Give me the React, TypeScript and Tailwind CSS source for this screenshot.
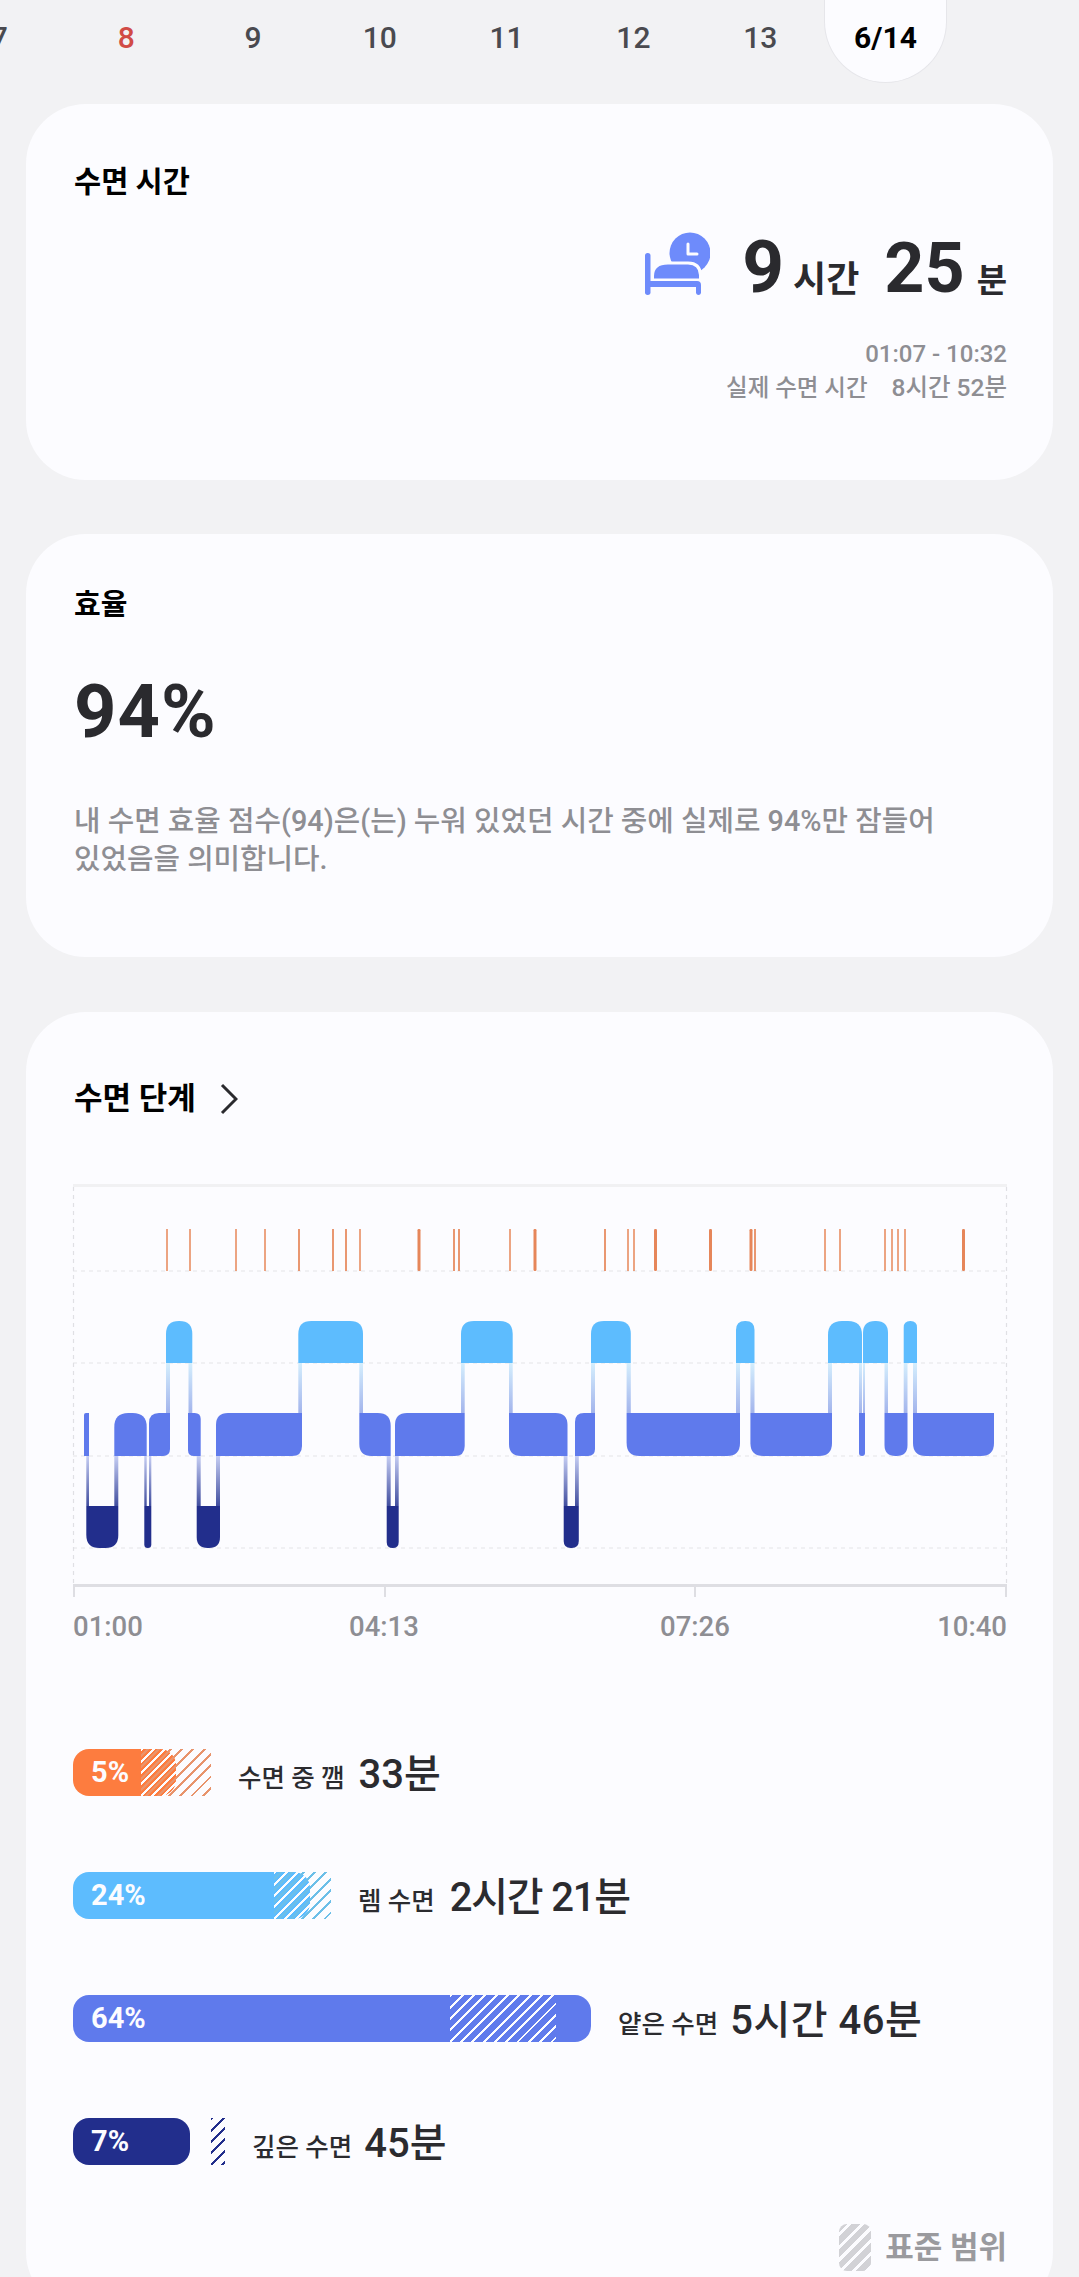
const days = [
  { label: "7", color: "text-[#4a4a4f]" },
  { label: "8", color: "text-[#d14b46]" },
  { label: "9", color: "text-[#4a4a4f]" },
  { label: "10", color: "text-[#4a4a4f]" },
  { label: "11", color: "text-[#4a4a4f]" },
  { label: "12", color: "text-[#4a4a4f]" },
  { label: "13", color: "text-[#4a4a4f]" },
];

const ticks: [number, number][] = [
  [167, 1.5], [190, 1.5], [236, 1.5], [265, 1.5], [299, 1.7], [333, 1.7], [346, 1.7], [360, 1.5], [419, 3], [454, 1.7],
  [459, 1.7], [510, 1.5], [535, 3], [605, 1.7], [628, 1.5], [634, 1.5], [655.5, 3], [710.5, 3], [751, 3], [755, 1.7],
  [825, 1.5], [840, 1.5], [885, 1.5], [892, 1.5], [898, 1.5], [905, 1.5], [963.5, 3],
];

// x0, x1, radii: tl tr br bl
type Seg = [number, number, number, number, number, number];

const remSegs: Seg[] = [
  [166, 192.3, 13, 13, 0, 0],
  [298.3, 363, 13, 13, 0, 0],
  [461, 512.7, 13, 13, 0, 0],
  [591, 630.8, 13, 13, 0, 0],
  [736, 754.5, 9, 9, 0, 0],
  [828, 862, 14, 14, 0, 0],
  [863, 888, 12, 12, 0, 0],
  [903.7, 917, 6.5, 6.5, 0, 0],
];

const lightSegs: Seg[] = [
  [84, 89, 2, 0, 0, 0],
  [114.3, 146.7, 14, 14, 0, 0],
  [149, 170, 10, 0, 7, 0],
  [188, 200.7, 0, 6, 0, 6],
  [216, 302, 12, 0, 10, 0],
  [359.3, 390.7, 0, 13, 0, 12],
  [395, 464.7, 12, 0, 10, 0],
  [509, 567.5, 0, 12, 0, 12],
  [575, 595, 9, 0, 7, 0],
  [626.6, 740, 0, 0, 13, 13],
  [750.4, 832, 0, 0, 13, 13],
  [859, 865, 0, 0, 3, 3],
  [884.5, 907.5, 0, 0, 11, 11],
  [913, 994, 0, 0, 13, 13],
];

const deepSegs: Seg[] = [
  [86.3, 118.3, 0, 0, 13, 13],
  [144.3, 151.3, 0, 0, 3.5, 3.5],
  [196.7, 220, 0, 0, 11, 11],
  [386.7, 398.7, 0, 0, 6, 6],
  [563.7, 578.8, 0, 0, 7, 7],
];

const upLinks = [
  [166, 170], [188.5, 192.3], [298.3, 302], [359.3, 363], [461, 464.7], [509, 512.7], [591, 595], [626.6, 630.8],
  [736, 740], [750.4, 754.5], [828, 832], [859, 862], [863, 865], [884.5, 888], [903.7, 907.5], [913, 917],
];
const downLinks = [
  [86.3, 89], [114.3, 118.3], [144.3, 146.7], [149, 151.3], [196.7, 200.7], [216, 220], [386.7, 390.7], [395, 398.7],
  [563.7, 567.5], [575, 578.8],
];

function segPath(seg: Seg, top: number, bottom: number) {
  const [x0, x1, tl, tr, br, bl] = seg;
  return `M${x0 + tl} ${top}H${x1 - tr}Q${x1} ${top} ${x1} ${top + tr}V${bottom - br}Q${x1} ${bottom} ${x1 - br} ${bottom}H${x0 + bl}Q${x0} ${bottom} ${x0} ${bottom - bl}V${top + tl}Q${x0} ${top} ${x0 + tl} ${top}Z`;
}

function SleepChart() {
  const ox = 60;
  const oy = 1180;
  return (
    <svg width="960" height="420" viewBox={`${ox} ${oy} 960 420`} className="block">
      <defs>
        <linearGradient id="upLink" x1="0" y1="0" x2="0" y2="1">
          <stop offset="0" stopColor="#d4eefd" />
          <stop offset="1" stopColor="#a3b4ec" />
        </linearGradient>
        <linearGradient id="downLink" x1="0" y1="0" x2="0" y2="1">
          <stop offset="0" stopColor="#c5cdf3" />
          <stop offset="1" stopColor="#414e9f" />
        </linearGradient>
      </defs>

      <rect x="73" y="1184" width="934" height="3" fill="#f1f1f3" />
      {[1271, 1363, 1456, 1548].map((y) => (
        <line key={y} x1="73" x2="1007" y1={y} y2={y} stroke="#e4e4e8" strokeWidth="1.2" strokeDasharray="4 4" />
      ))}
      <line x1="73.5" x2="73.5" y1="1187" y2="1585" stroke="#e0e0e4" strokeWidth="1.2" strokeDasharray="4 4" />
      <line x1="1006.5" x2="1006.5" y1="1187" y2="1585" stroke="#e0e0e4" strokeWidth="1.2" strokeDasharray="4 4" />

      {ticks.map(([x, w]) => (
        <rect key={x} x={x - w / 2} y="1229" width={w} height="42" rx={w > 2 ? 1.2 : 0} fill="#e6865a" />
      ))}

      {upLinks.map(([a, b]) => (
        <rect key={a} x={a} y="1363" width={b - a} height="50" fill="url(#upLink)" />
      ))}
      {downLinks.map(([a, b]) => (
        <rect key={a} x={a} y="1456" width={b - a} height="50" fill="url(#downLink)" />
      ))}

      {remSegs.map((s) => (
        <path key={s[0]} d={segPath(s, 1321, 1363)} fill="#5dbcfe" />
      ))}
      {lightSegs.map((s) => (
        <path key={s[0]} d={segPath(s, 1413, 1456)} fill="#5f7aec" />
      ))}
      {deepSegs.map((s) => (
        <path key={s[0]} d={segPath(s, 1506, 1548)} fill="#222e8c" />
      ))}

      <rect x="73" y="1584" width="934" height="3" fill="#dedee3" />
      {[74, 385, 695, 1006].map((x) => (
        <rect key={x} x={x - 1} y="1586" width="2" height="11" fill="#dedee3" />
      ))}
    </svg>
  );
}

function BedIcon() {
  return (
    <svg width="66" height="64" viewBox="0 0 66 64" className="self-start shrink-0">
      <circle cx="46" cy="21" r="20.5" fill="#6e8bfb" />
      <path d="M44 12V22H53" fill="none" stroke="#fcfcff" strokeWidth="3" strokeLinecap="round" strokeLinejoin="round" />
      <path d="M8.5 48V44Q8.5 31 24 31H44Q56 31 56.5 43V48Z" fill="#6e8bfb" stroke="#fcfcff" strokeWidth="3" />
      <rect x="1" y="21" width="5.5" height="42" rx="2.7" fill="#6e8bfb" />
      <path d="M5 49H53Q57 49 57 53V61A2.6 2.6 0 0 1 52 61V55H5Z" fill="#6e8bfb" />
    </svg>
  );
}

function StageRow({
  pct,
  width,
  barWidth,
  hatchLeft,
  hatchWidth,
  bg,
  hatch,
  label,
  value,
  valueClass,
}: {
  pct: string;
  width: number;
  barWidth: number;
  hatchLeft: number;
  hatchWidth: number;
  bg: string;
  hatch: string;
  label: string;
  value: string;
  valueClass: string;
}) {
  return (
    <div className="flex items-center h-[47px]">
      <div className="relative h-[47px] shrink-0" style={{ width }}>
        <div className={`h-full rounded-[16px] pl-[18px] text-[29px] leading-[46px] font-bold text-[#fcfcff] ${bg}`} style={{ width: barWidth }}>
          {pct}
        </div>
        <div className={`absolute top-0 h-full ${hatch}`} style={{ left: hatchLeft, width: hatchWidth }} />
      </div>
      <span className="ml-[27px] mt-[10px] text-[25.5px] leading-[36px] font-medium text-[#2b2b2f] whitespace-nowrap">{label}</span>
      <span className={`mt-[4px] text-[40px] leading-[50px] font-medium text-[#2b2b2f] whitespace-nowrap ${valueClass}`}>{value}</span>
    </div>
  );
}

export default function App() {
  return (
    <div className="h-[2277px] w-[1079px] overflow-hidden bg-[#f2f2f4] font-['Roboto','Noto_Sans_CJK_KR',sans-serif]">
      <div className="flex h-[83px] -ml-[64px] mb-[21px]">
        {days.map((d) => (
          <div key={d.label} className={`w-[126.8px] shrink-0 text-center text-[30px] leading-[76px] font-medium ${d.color}`}>
            {d.label}
          </div>
        ))}
        <div className="w-[126.8px] shrink-0 pr-[3px] pl-0">
          <div className="h-[83px] rounded-b-[62px] bg-[#fcfcff] border border-t-0 border-[#e6e6ea] text-center text-[30px] leading-[76px] font-bold text-black">
            6/14
          </div>
        </div>
      </div>

      <section className="mx-[26px] h-[376px] rounded-[60px] bg-[#fcfcff] pl-[48px] pr-[46px] pt-[58px]">
        <h2 className="text-[29.5px] leading-[40px] font-bold text-black">수면 시간</h2>
        <div className="mt-[30px] flex justify-end items-baseline h-[70px] text-[#2a2a2e] font-bold">
          <BedIcon />
          <span className="ml-[32px] text-[73px] leading-[70px] tracking-[1px]">9</span>
          <span className="ml-[8px] text-[36px] leading-[70px]">시간</span>
          <span className="ml-[25px] text-[70px] leading-[70px]">25</span>
          <span className="ml-[12px] text-[33px] leading-[70px]">분</span>
        </div>
        <p className="mt-[36px] text-right text-[24px] leading-[32px] font-medium text-[#8e8e93]">01:07 - 10:32</p>
        <p className="mt-[2px] flex justify-end gap-[24px] leading-[32px] font-medium text-[#8e8e93]">
          <span className="text-[23.5px]">실제 수면 시간</span>
          <span className="text-[24.5px]">8시간 52분</span>
        </p>
      </section>

      <section className="mx-[26px] mt-[54px] h-[423px] rounded-[60px] bg-[#fcfcff] pl-[48px] pr-[46px] pt-[51px]">
        <h2 className="text-[29px] leading-[40px] font-bold text-black">효율</h2>
        <p className="mt-[51px] text-[74px] leading-[72px] font-bold text-[#2a2a2e] tracking-[1px]">94%</p>
        <p className="mt-[54px] text-[28.8px] leading-[38px] font-medium text-[#8e8e93] whitespace-nowrap">
          내 수면 효율 점수(94)은(는) 누워 있었던 시간 중에 실제로 94%만 잠들어
          <br />
          있었음을 의미합니다.
        </p>
      </section>

      <section className="mx-[26px] mt-[55px] h-[1300px] rounded-[60px] bg-[#fcfcff] pt-[67px]">
        <div className="flex items-center pl-[48px]">
          <h2 className="text-[31px] leading-[40px] font-bold text-black">수면 단계</h2>
          <svg width="18" height="32" viewBox="0 0 18 32" className="ml-[24px]">
            <path d="M2 2L16 16L2 30" fill="none" stroke="#2a2a2e" strokeWidth="3" />
          </svg>
        </div>

        <div className="mt-[61px] ml-[34px]">
          <SleepChart />
        </div>

        <div className="mt-[11px] ml-[47px] grid grid-cols-[157px_308px_314px_155px] text-[27.5px] leading-[32px] font-medium text-[#8e8e93]">
          <span>01:00</span>
          <span className="text-center">04:13</span>
          <span className="text-center">07:26</span>
          <span className="text-right">10:40</span>
        </div>

        <div className="mt-[106px] ml-[47px] flex flex-col gap-[76px]">
          <StageRow pct="5%" width={138} barWidth={103} hatchLeft={68} hatchWidth={70} bg="bg-[#fd7c3f]" label="수면 중 깸" value="33분" valueClass="ml-[14px]"
            hatch="bg-[repeating-linear-gradient(135deg,#fcfcff_0_2px,transparent_2px_4px,#e8946c_4px_6px,transparent_6px_8px)]" />
          <StageRow pct="24%" width={258} barWidth={237} hatchLeft={201} hatchWidth={57} bg="bg-[#5dbcfe]" label="렘 수면" value="2시간 21분" valueClass="ml-[15px] tracking-[-1.2px]"
            hatch="bg-[repeating-linear-gradient(135deg,#fcfcff_0_2px,transparent_2px_4px,#6cbfe8_4px_6px,transparent_6px_8px)]" />
          <StageRow pct="64%" width={518} barWidth={518} hatchLeft={377} hatchWidth={106} bg="bg-[#5f7aec]" label="얕은 수면" value="5시간 46분" valueClass="ml-[12px] tracking-[0.5px]"
            hatch="bg-[repeating-linear-gradient(135deg,#fcfcff_0_2px,transparent_2px_8px)]" />
          <StageRow pct="7%" width={152} barWidth={117} hatchLeft={138} hatchWidth={14} bg="bg-[#222e8c]" label="깊은 수면" value="45분" valueClass="ml-[12px]"
            hatch="bg-[repeating-linear-gradient(135deg,#222e8c_0_2px,transparent_2px_8px)]" />
        </div>

        <div className="mt-[59px] mr-[46px] flex justify-end items-center">
          <div className="w-[32px] h-[47px] rounded-[8px] bg-[repeating-linear-gradient(135deg,#d2d2d6_0_6px,#fcfcff_6px_9px)]" />
          <span className="ml-[14px] text-[31px] leading-[40px] font-bold text-[#9a9a9e]">표준 범위</span>
        </div>
      </section>
    </div>
  );
}
